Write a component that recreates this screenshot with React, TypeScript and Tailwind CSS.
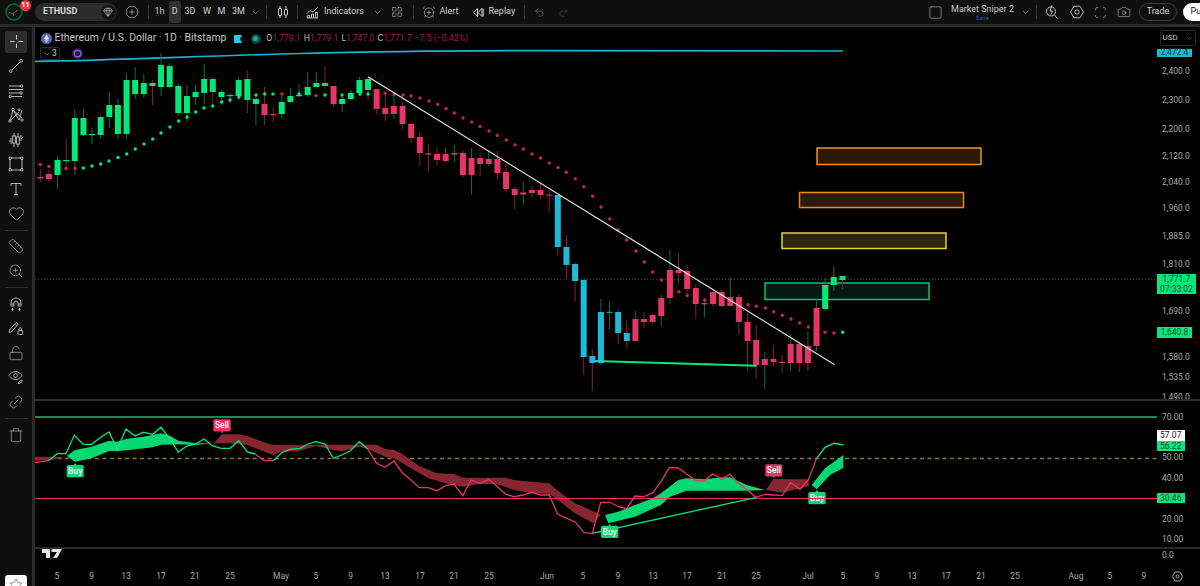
import React from "react";
import {
  AlarmClockPlus,
  Camera,
  ChevronDown,
  CirclePlus,
  Gem,
  Heart,
  LayoutGrid,
  Link2,
  LockOpen,
  Redo2,
  Ruler,
  Scan,
  Square,
  Star,
  Trash,
  Undo2,
  ZoomIn,
} from "lucide-react";

const GREEN = "#04e87a";
const RED = "#e53665";
const BLUE = "#1fb8d6";
const WICK_G = "#0b6e52";
const WICK_R = "#8a1c42";

// high, body top, body bottom, low, body colour, wick colour (page pixels)
type Candle = [number, number, number, number, string, string];
const g = (a: number, b: number, c: number, d: number, w = WICK_G): Candle => [a, b, c, d, GREEN, w];
const r = (a: number, b: number, c: number, d: number, w = WICK_R): Candle => [a, b, c, d, RED, w];
const b = (a: number, b2: number, c: number, d: number, w = WICK_R): Candle => [a, b2, c, d, BLUE, w];

const CANDLES: Candle[] = [
  r(169, 177, 178.4, 182), r(170, 174, 179, 181), g(156, 160, 175, 189), g(139, 160, 161.2, 169, WICK_R),
  g(109, 118, 161, 175), g(109, 118, 135, 136), g(128, 134, 135.2, 144), g(115, 117, 135, 138),
  g(92, 105, 117, 128), g(99, 105, 134, 139), g(73, 80, 134, 138), g(67, 80, 94, 99),
  g(74, 83, 94, 98), g(80, 83, 86, 105, WICK_R), g(53, 65, 87, 96), g(63, 66, 87, 88),
  g(84, 86, 113, 116), g(85, 96, 113, 122), g(85, 92, 97, 105), g(64, 79, 93, 105),
  g(77, 79, 92, 105, WICK_R), g(90, 92, 97, 105), g(93, 95, 96.2, 103), g(77, 80, 96, 100),
  g(70, 79, 100, 113, WICK_R), g(97, 99, 104, 125), r(87, 104, 115, 125), r(107, 114, 115.2, 122),
  g(93, 102, 114, 118), g(88, 96, 102, 103), g(84, 95, 96.2, 97), g(72, 87, 95, 97),
  g(72, 83, 87, 87), g(66, 83, 86, 89, WICK_R), r(86, 86, 104, 107), g(94, 99, 104, 112),
  g(90, 93, 99, 100), g(77, 80, 93, 96), g(77, 79, 90, 100, WICK_R), r(89, 89, 109, 114),
  r(93, 108, 114, 121), r(93, 106, 114, 119, WICK_G), r(102, 106, 124, 129), r(124, 124, 138, 143),
  r(132, 137, 153, 166), r(144, 153.4, 154.6, 171), r(148, 154, 160, 165), r(148, 154, 161, 162, WICK_G),
  r(145, 153, 154.6, 162, WICK_G), r(150, 153, 175, 177), r(148, 158, 175, 194, WICK_G), r(153, 158, 164, 176),
  r(150, 159, 164, 166, WICK_G), r(151, 159, 173, 179), r(165, 172, 189, 192), r(187, 189, 195, 209),
  r(182, 192.4, 194.6, 205, WICK_G), r(186, 190, 193, 197, WICK_G), r(183, 190, 195, 199), r(190, 194.6, 195.6, 212),
  b(195, 195, 247, 255), b(235, 247, 265, 280), b(262, 264, 281, 301), b(280, 280, 357, 375),
  b(349, 356, 363, 391), b(299, 312, 363, 365, WICK_G), b(302, 311.8, 312.8, 330, WICK_G), b(309, 312, 333, 344),
  b(321, 333, 341, 348), r(311, 319, 341, 341, WICK_G), r(312, 319, 322, 328), r(314, 315, 322, 323),
  r(295, 298, 316, 326, WICK_G), r(250, 270, 298, 304, WICK_G), r(254, 270, 273, 283), r(265, 271, 289, 297),
  r(284, 288, 304, 319), r(298, 303, 304.4, 317, WICK_G), r(290, 292, 304, 307), r(290, 292, 306, 307),
  r(277, 297, 306, 306, WICK_G), r(294, 297, 322, 335), r(313, 322, 341, 370), r(325, 340, 365, 379),
  r(352, 359, 365, 389, WICK_G), r(345, 359, 362, 366), r(355, 361.8, 363, 373), r(334, 344, 363, 371, WICK_G),
  r(343, 344, 363, 372), r(331, 346, 363, 371, WICK_G), r(299, 308, 346, 351, WICK_G), g(278, 285, 309, 311),
  g(266, 277, 285, 291), g(276, 276, 280, 289, WICK_R),
];

// parabolic SAR dots: x, y
const SAR_GREEN = [
  [83.3, 168], [92, 166], [100.7, 164], [109, 161], [118, 157.5], [126.7, 154], [135.3, 149], [144, 144],
  [152.7, 139], [161, 133], [170, 127], [178.7, 121], [187, 117], [195.7, 112], [204, 108], [212.7, 106],
  [221.7, 102], [230, 100], [239, 97], [256, 95], [264.7, 94], [273, 94], [299, 94], [325, 95], [342, 95],
  [360, 94], [368, 94], [842.7, 332.3],
];
const SAR_RED = [
  [40.3, 164.5], [49, 166.5], [66, 168.5], [75, 168.5], [282, 94], [316, 95.6], [385, 93.5], [394, 94.5],
  [403, 95], [411, 96], [420, 98], [429, 101], [437.7, 104.5], [446, 108.5], [454.3, 113], [463, 118],
  [471.7, 122], [480, 126.5], [489, 131], [497.3, 135.5], [506.3, 140], [515, 145], [523.3, 149], [532, 154],
  [540.7, 158], [549.3, 163], [558, 167.5], [566.3, 172.3], [575.3, 178.7], [583.7, 186.7], [592.7, 196.3],
  [601, 207], [609.7, 219], [618, 230], [626.7, 240], [636, 251], [644.3, 262], [652.7, 272], [661.7, 280],
  [679, 291.7], [687.3, 295.5], [704.7, 300.3], [748, 304.7], [756.3, 306.3], [765.3, 308], [773.7, 311.7],
  [782.3, 315.3], [791, 319], [799.7, 323], [808.3, 327], [825, 332.3], [834, 333],
];

const ZONES = [
  { x: 817, y: 148, w: 164, h: 16.5, border: "#f0921e", fill: "#2b1a07" },
  { x: 799.5, y: 192.5, w: 164, h: 15, border: "#ea8a1c", fill: "#2c1b07" },
  { x: 782, y: 233, w: 164, h: 15.5, border: "#ead43a", fill: "#2b2709" },
  { x: 765, y: 283, w: 164, h: 16.5, border: "#0ec46f", fill: "#021a11" },
];

const RSI_A = "35,462.7 48.3,460.7";
const RSI_B =
  "48.3,460.7 57.3,453.7 66,453.7 74.3,435.3 83.3,444.3 91.7,444.3 100.7,437.3 109,432 117.3,449.3 126,429 135,436 143.3,432.3 152.7,434.3 161,427.3 170,439 178.3,452 186.7,446 195.7,444 204,439 212.7,446 221.3,448.3 230,448.3 238.7,440.7 247.3,452 255,454";
const RSI_C = "255,454 264.3,460.7 273.3,460.7";
const RSI_D =
  "273.3,460.7 281.7,452.7 290,449.3 300,448.3 308,444 316,441.7 325,444 333.3,458.3 341.7,455 350,451 359.3,441.7 367.7,449";
const RSI_E =
  "367.7,449 376.7,463.3 385,467.3 394,461 402.3,472.7 411,480 419.3,487.7 428.3,487.7 436.7,490.7 445.7,485.7 454,484 462.7,495.7 471,480 480,483.3 489,479.3 496.7,486 505.7,494.3 514,496.7 523.3,495 531.7,492.3 540.7,495 549.3,495 557.7,514.3 566.7,518.3 575,521.7 584,532.7 592.3,533.3 600.7,502.3 610,502.3 618.3,506.7 626.7,508.7 635,496 644,496.7 652.7,492.7 661,481.7 669.3,467.7 678.3,468 686.7,474 695,480.3 704.3,481 712.7,473.7 721.7,479.3 730,474 738.3,483.3 747.3,490 755.7,497.3 765,494.3 773.3,495 782.3,495.3 790.7,482.7 800,489.3 808.3,480 816.7,458.3";
const RSI_F = "816.7,458.3 825,447.3 834,443.3 843.3,445";

// cloud outlines measured on a 3x grid from the page's left edge, y from 400
const crop = (pts: number[][]) => pts.map(([x, y]) => `${x / 3},${400 + y / 3}`).join(" ");

const CLOUD_GREEN = [
  crop([[200, 168], [225, 150], [275, 140], [327, 122], [352, 125], [378, 117], [430, 110], [483, 100], [510, 107], [535, 122], [587, 130], [638, 130], [587, 135], [535, 133], [483, 134], [458, 142], [405, 148], [352, 154], [327, 153], [275, 175], [225, 185]]),
  crop([[1802, 342], [1815, 345], [1855, 335], [1905, 315], [1958, 295], [1983, 280], [2035, 240], [2060, 235], [2113, 238], [2165, 232], [2190, 232], [2240, 255], [2295, 270], [2240, 272], [2165, 272], [2060, 272], [2010, 290], [1983, 315], [1905, 350], [1855, 362], [1825, 370], [1815, 345]]),
  crop([[2435, 255], [2475, 205], [2530, 165], [2530, 203], [2490, 225], [2450, 268]]),
];
const CLOUD_RED = [
  crop([[105, 170], [150, 170], [200, 170], [150, 180], [105, 182]]),
  crop([
    [642, 130], [665, 103], [716, 103], [742, 108], [793, 127], [820, 135], [900, 136], [948, 134], [1000, 134], [1050, 134], [1130, 134], [1155, 147], [1182, 150], [1207, 162], [1258, 198], [1310, 220], [1362, 222], [1388, 233], [1517, 233], [1542, 240], [1595, 245], [1648, 250], [1673, 272], [1725, 310], [1790, 338], [1802, 345],
    [1780, 370], [1725, 340], [1673, 300], [1648, 282], [1595, 280], [1542, 270], [1490, 252], [1440, 252], [1388, 260], [1337, 250], [1285, 235], [1233, 205], [1182, 175], [1155, 170], [1105, 148], [1078, 140], [1025, 154], [1000, 150], [948, 138], [900, 152], [845, 155], [820, 165], [793, 155], [742, 135], [690, 130],
  ]),
  crop([[2298, 270], [2320, 237], [2425, 238], [2427, 258], [2347, 278]]),
];

const TAGS = [
  { x: 66.7, y: 465, w: 17, text: "Buy", fill: "#08d975", up: true },
  { x: 213.3, y: 419.3, w: 17.4, text: "Sell", fill: "#e53665", up: false },
  { x: 601, y: 525.7, w: 17.3, text: "Buy", fill: "#08d975", up: true },
  { x: 765.3, y: 464.3, w: 17, text: "Sell", fill: "#e53665", up: false },
  { x: 808.3, y: 492, w: 17.4, text: "Buy", fill: "#08d975", up: true },
];

const PRICE_TICKS = [
  ["2,400.0", 70.5], ["2,300.0", 99.5], ["2,200.0", 129], ["2,120.0", 155.5], ["2,040.0", 181.5], ["1,960.0", 208],
  ["1,885.0", 236], ["1,810.0", 264], ["1,690.0", 311], ["1,580.0", 356.7], ["1,535.0", 376.7], ["1,490.0", 397],
] as const;

const RSI_TICKS = [
  ["70.00", 416.7], ["50.00", 457.3], ["40.00", 478], ["20.00", 518.7], ["10.00", 538.7],
] as const;

const TIME_TICKS = [
  ["5", 57], ["9", 91.7], ["13", 126], ["17", 161], ["21", 195], ["25", 230], ["May", 281], ["5", 316], ["9", 350.7],
  ["13", 385], ["17", 420], ["21", 454], ["25", 489], ["Jun", 547], ["5", 583], ["9", 618], ["13", 653], ["17", 687],
  ["21", 722], ["25", 756], ["Jul", 808], ["5", 843], ["9", 877], ["13", 912], ["17", 946], ["21", 981], ["25", 1015],
  ["Aug", 1076], ["5", 1110], ["9", 1144],
] as const;

const ICON = "#b4b4b4";

function ToolIcon({ children }: { children: React.ReactNode }) {
  return (
    <svg width="16" height="16" viewBox="0 0 16 16" fill="none" stroke={ICON} strokeWidth="1">
      {children}
    </svg>
  );
}

const TOOLS: React.ReactNode[][] = [
  [
    <ToolIcon key="line">
      <path d="M3.5 12.5 12.5 3.5" />
      <circle cx="2.8" cy="13.2" r="1.3" />
      <circle cx="13.2" cy="2.8" r="1.3" />
    </ToolIcon>,
    <ToolIcon key="fib">
      <path d="M1 3h11M1 6.5h14M1 10h11M4 13.5h10" />
      <circle cx="13.6" cy="3" r="1.2" />
      <circle cx="13" cy="10" r="1.2" />
      <circle cx="2.4" cy="13.5" r="1.2" />
    </ToolIcon>,
    <ToolIcon key="xabcd">
      <path d="M2 14 5 3l6 10 3-10M5 3l9 8M2 14 11 5" />
      <circle cx="5" cy="2.5" r="1.2" />
      <circle cx="11" cy="2.8" r="1" />
      <circle cx="2" cy="14" r="1.2" />
      <circle cx="14" cy="13" r="1.2" />
    </ToolIcon>,
    <ToolIcon key="forecast">
      <path d="M6 1v14M10 1v14M3 6v6M13 3v6" />
      <rect x="4.6" y="4" width="2.8" height="7" fill="#0f0f0f" />
      <rect x="8.6" y="5" width="2.8" height="7" fill="#0f0f0f" />
      <path d="M1 9h2M13 7l2-2" />
    </ToolIcon>,
    <ToolIcon key="rect">
      <path d="M3 2h10M3 14h10M2 3v10M14 3v10" />
      <circle cx="2.2" cy="2.2" r="1.3" />
      <circle cx="13.8" cy="2.2" r="1.3" />
      <circle cx="2.2" cy="13.8" r="1.3" />
      <circle cx="13.8" cy="13.8" r="1.3" />
    </ToolIcon>,
    <ToolIcon key="text">
      <path d="M3 5V2.5h10V5M8 2.5v11M6 13.5h4" />
    </ToolIcon>,
    <Heart key="heart" size={17} strokeWidth={1} color={ICON} />,
  ],
  [
    <Ruler key="ruler" size={16} strokeWidth={1} color={ICON} />,
    <ZoomIn key="zoom" size={16} strokeWidth={1} color={ICON} />,
  ],
  [
    <ToolIcon key="magnet">
      <path d="M3 10V7a5 5 0 0 1 10 0v3h-3V7a2 2 0 0 0-4 0v3zM3 8h3M10 8h3" />
      <path d="M4.5 12v2.5M11.5 12v2.5M3.5 13.5l1 1 1-1M10.5 13.5l1 1 1-1" />
    </ToolIcon>,
    <ToolIcon key="pencil-lock">
      <path d="M1.5 10 8 2.5l2 1.8L3.5 12l-2.2.5zM7 3.7l2 1.8" />
      <rect x="10" y="10.5" width="4.6" height="4" rx=".6" />
      <path d="M11 10.5V9a1.3 1.3 0 0 1 2.6 0v1.5" />
    </ToolIcon>,
    <LockOpen key="lock" size={16} strokeWidth={1} color={ICON} />,
    <ToolIcon key="eye">
      <path d="M1 6.5S3.5 2.5 7.5 2.5 14 6.5 14 6.5s-2.5 4-6.5 4-6.5-4-6.5-4z" />
      <circle cx="7.5" cy="6.5" r="1.8" />
      <path d="m10 14 3.5-3 1 1-3.5 3z" />
    </ToolIcon>,
    <Link2 key="link" size={16} strokeWidth={1} color={ICON} className="-rotate-45" />,
  ],
  [<Trash key="trash" size={16} strokeWidth={1} color={ICON} />],
];

function Sep() {
  return <div className="h-[14px] w-px bg-[#333333]" />;
}

function ChartPane() {
  return (
    <svg className="absolute inset-0 h-full w-full" aria-hidden="true">
      <g transform="translate(-35 -27)">
        <line x1="35" y1="279.5" x2="1157" y2="279.5" stroke="#1c6b4f" strokeWidth="0.8" strokeDasharray="1 2" />
        <path d="M35 61.4C120 60 200 56 300 53.5S420 51 520 50.6 720 50.8 843 51" fill="none" stroke="#1ab3cf" strokeWidth="1.7" />
        {ZONES.map((z) => (
          <rect key={z.y} x={z.x} y={z.y} width={z.w} height={z.h} fill={z.fill} stroke={z.border} strokeWidth="1.5" />
        ))}
        {CANDLES.map((c, i) => {
          const x = 40.3 + 8.625 * i;
          return (
            <g key={i}>
              <line x1={x} y1={c[0]} x2={x} y2={c[3]} stroke={c[5]} strokeWidth="1" />
              <rect x={x - 3} y={c[1]} width="6" height={c[2] - c[1]} fill={c[4]} />
            </g>
          );
        })}
        {SAR_RED.map(([x, y]) => (
          <circle key={x} cx={x} cy={y} r="1.7" fill="#c4245a" />
        ))}
        {SAR_GREEN.map(([x, y]) => (
          <circle key={x} cx={x} cy={y} r="1.7" fill={GREEN} />
        ))}
        <line x1="368" y1="76.7" x2="834.3" y2="364.5" stroke="#e8e8e8" strokeWidth="1.2" />
        <line x1="595" y1="361" x2="756.7" y2="365.7" stroke={GREEN} strokeWidth="2" />
      </g>
    </svg>
  );
}

function RsiPane() {
  return (
    <svg className="absolute inset-0 h-full w-full" aria-hidden="true">
      <g transform="translate(-35 -401)">
        <line x1="35" y1="417" x2="1157" y2="417" stroke="#0fbf75" strokeWidth="1.4" />
        <line x1="35" y1="458.5" x2="1157" y2="458.5" stroke="#8a7a20" strokeWidth="1.3" strokeDasharray="4 3.5" />
        {CLOUD_GREEN.map((p) => (
          <polygon key={p} points={p} fill="#04d873" />
        ))}
        {CLOUD_RED.map((p) => (
          <polygon key={p} points={p} fill="#86262f" />
        ))}
        <line x1="35" y1="498.5" x2="1157" y2="498.5" stroke="#ee2f5f" strokeWidth="1.2" />
        <line x1="592.3" y1="533.3" x2="756.7" y2="497.3" stroke={GREEN} strokeWidth="1.3" />
        {[RSI_A, RSI_C, RSI_E].map((p) => (
          <polyline key={p} points={p} fill="none" stroke="#e53665" strokeWidth="1.3" />
        ))}
        {[RSI_B, RSI_D, RSI_F].map((p) => (
          <polyline key={p} points={p} fill="none" stroke={GREEN} strokeWidth="1.3" />
        ))}
        {TAGS.map((t) => {
          const mid = t.x + t.w / 2;
          const arrow = t.up
            ? `${mid - 1.5},${t.y} ${mid},${t.y - 2} ${mid + 1.5},${t.y}`
            : `${mid - 1.5},${t.y + 12} ${mid},${t.y + 14} ${mid + 1.5},${t.y + 12}`;
          return (
            <g key={t.x}>
              <rect x={t.x} y={t.y} width={t.w} height="12.3" rx="1.5" fill={t.fill} />
              <polygon points={arrow} fill={t.fill} />
              <text x={mid} y={t.y + 9} textAnchor="middle" fontSize="8.5" fontWeight="500" fill="#ffffff" fontFamily="Roboto, sans-serif">
                {t.text}
              </text>
            </g>
          );
        })}
        <line x1="808.3" y1="498.5" x2="825.7" y2="498.5" stroke="#ee2f5f" strokeWidth="1.2" />
      </g>
    </svg>
  );
}

export default function App() {
  return (
    <div className="flex h-[586px] w-[1200px] flex-col overflow-hidden bg-[#2b2b2b] font-['Roboto',sans-serif] text-[#c6c8cc]">
      {/* top bar */}
      <header className="flex h-[24px] shrink-0 items-center bg-[#0f0f0f] text-[9px] text-[#d0d2d6]">
        <div className="relative ml-[5px] h-[18px] w-[18px] rounded-full border-2 border-[#0d5a2c] bg-[#06170d]">
          <svg viewBox="0 0 14 14" className="h-full w-full" fill="none">
            <path d="M2 7.5 6 8.5 11 5" stroke="#b04a2a" strokeWidth="1" />
            <path d="M6 8.5 7 11" stroke="#1f9d55" strokeWidth="1" />
          </svg>
          <span className="absolute left-[13px] top-[-5px] flex h-[11px] w-[11px] items-center justify-center rounded-full bg-[#ef3347] text-[7px] font-bold text-white">
            11
          </span>
        </div>
        <div className="ml-[12px] flex h-[18px] w-[82px] items-center justify-between rounded-full bg-[#2b2b2b] pl-[8px] pr-[1.5px]">
          <span className="text-[9px] font-bold text-[#d6d6d6]">ETHUSD</span>
          <span className="flex h-[15px] w-[15px] items-center justify-center rounded-full bg-[#141414]">
            <Gem size={10} strokeWidth={1.5} color="#d0d0d0" />
          </span>
        </div>
        <CirclePlus size={14} strokeWidth={1} color="#cfcfcf" className="ml-[8px]" />
        <div className="ml-[8.5px]">
          <Sep />
        </div>
        <span className="ml-[5px] w-[12px] text-center">1h</span>
        <span className="ml-[3.5px] flex h-[22px] w-[11.5px] items-center justify-center rounded-[2px] bg-[#303030]">D</span>
        <span className="ml-[2.5px] w-[14px] text-center">3D</span>
        <span className="ml-[3.5px] w-[13px] text-center">W</span>
        <span className="ml-[1.5px] w-[13px] text-center">M</span>
        <span className="ml-[3.5px] w-[14px] text-center">3M</span>
        <ChevronDown size={9} strokeWidth={1.5} color="#b0b0b0" className="ml-[5.5px]" />
        <div className="ml-[6px]">
          <Sep />
        </div>
        <svg width="14" height="14" viewBox="0 0 14 14" fill="none" stroke="#cfcfcf" className="ml-[8.5px]">
          <path d="M4 1v2.5M4 10.5V13M10 1v3M10 10v3" />
          <rect x="2.5" y="3.5" width="3" height="7" rx=".5" />
          <rect x="8.5" y="4.5" width="3" height="5.5" rx=".5" />
        </svg>
        <div className="ml-[7px]">
          <Sep />
        </div>
        <svg width="13" height="13" viewBox="0 0 13 13" fill="none" stroke="#cfcfcf" strokeWidth=".9" className="ml-[8.5px]">
          <path d="M1 7.5 4 4.5l3 1.5L11.5 1.5" />
          <path d="M1 12h11M1.5 12V9.5h2V12M5.5 12V8h2v4M9.5 12V6.5h2V12" />
        </svg>
        <span className="ml-[5px] w-[40px]">Indicators</span>
        <ChevronDown size={9} strokeWidth={1.5} color="#b0b0b0" className="ml-[9px]" />
        <LayoutGrid size={12} strokeWidth={1} color="#cfcfcf" className="ml-[9px]" />
        <div className="ml-[9.5px]">
          <Sep />
        </div>
        <AlarmClockPlus size={14} strokeWidth={1} color="#cfcfcf" className="ml-[8px]" />
        <span className="ml-[4px]">Alert</span>
        <svg width="12" height="11" viewBox="0 0 12 11" fill="none" stroke="#cfcfcf" className="ml-[13px]">
          <path d="M5.5 1.5 1.5 5.5l4 4zM10 1.5l-4 4 4 4z" />
          <path d="M11.2 1.5v8" />
        </svg>
        <span className="ml-[5px]">Replay</span>
        <div className="ml-[9px]">
          <Sep />
        </div>
        <Undo2 size={11} strokeWidth={1} color="#a0a0a0" className="ml-[9px]" />
        <Redo2 size={11} strokeWidth={1} color="#5a5a5a" className="ml-[13px]" />

        <div className="ml-auto flex items-center">
          <Square size={15} strokeWidth={1} color="#b8b8b8" />
          <div className="ml-[7.5px] flex w-[64px] flex-col items-center gap-[1px] whitespace-nowrap pt-[2px] leading-none">
            <span className="text-[9px] text-[#c8c8c8]">Market Sniper 2</span>
            <span className="text-[6px] text-[#2f4ae6]">Save</span>
          </div>
          <ChevronDown size={9} strokeWidth={1.5} color="#b0b0b0" className="ml-[6px]" />
          <div className="ml-[6px]">
            <Sep />
          </div>
          <svg width="14" height="14" viewBox="0 0 14 14" fill="none" stroke="#cfcfcf" strokeWidth=".9" className="ml-[8px]">
            <circle cx="6" cy="6.5" r="4.5" />
            <path d="m9.5 10 3 3.5M7 .5 5 6h2.5L6 9.5" />
          </svg>
          <svg width="14" height="14" viewBox="0 0 14 14" fill="none" stroke="#cfcfcf" strokeWidth=".9" className="ml-[11px]">
            <path d="M4 1.2h6L13.5 7 10 12.8H4L.5 7z" />
            <circle cx="7" cy="7" r="2.2" />
          </svg>
          <Scan size={13} strokeWidth={1} color="#cfcfcf" className="ml-[10.5px]" />
          <Camera size={14} strokeWidth={1} color="#cfcfcf" className="ml-[10px]" />
          <span className="ml-[8px] flex h-[18px] w-[38px] items-center justify-center rounded-full border border-[#3c3c3c]">Trade</span>
          <span className="ml-[5.5px] flex h-[18px] w-[17.5px] items-center overflow-hidden whitespace-nowrap rounded-l-full bg-white pl-[8px] text-[#111111]">
            Publish
          </span>
        </div>
      </header>

      <div className="mt-[3px] flex min-h-0 flex-1">
        {/* drawing tools */}
        <aside className="relative mr-[3px] flex w-[32px] shrink-0 flex-col items-center bg-[#0f0f0f] pt-[4px]">
          <div className="flex h-[21.5px] w-[21.5px] items-center justify-center rounded-[3px] bg-[#2e2e2e]">
            <svg width="15" height="15" viewBox="0 0 15 15" stroke="#d0d0d0" strokeWidth="1">
              <path d="M7.5 1v4.5M7.5 9.5V14M1 7.5h4.5M9.5 7.5H14" />
            </svg>
          </div>
          <div className="mt-[1.5px] flex w-full flex-col items-center">
            {TOOLS.map((group, i) => (
              <React.Fragment key={i}>
                {i > 0 && (
                  <div className="flex h-[8.5px] w-full items-center justify-center pt-[1px]">
                    <div className="h-px w-[23px] bg-[#2e2e2e]" />
                  </div>
                )}
                {group.map((icon, j) => (
                  <div key={j} className="flex h-[24.5px] w-full items-center justify-center">
                    {icon}
                  </div>
                ))}
              </React.Fragment>
            ))}
          </div>
          <div className="absolute left-[4.5px] top-[548px] flex h-[30px] w-[22px] justify-center rounded-[3px] bg-white pt-[3px]">
            <Star size={14} strokeWidth={1} color="#333333" />
          </div>
        </aside>

        <main className="flex min-w-0 flex-1 flex-col bg-black">
          {/* price pane */}
          <section className="flex h-[372px] shrink-0">
            <div className="relative min-w-0 flex-1 overflow-hidden">
              <ChartPane />
              <div className="absolute left-[5.5px] top-[4px] flex h-[15px] items-center text-[10.4px] leading-none">
                <svg width="11" height="11" viewBox="0 0 11 11" className="mr-[3px]">
                  <circle cx="5.5" cy="5.5" r="5.5" fill="#5a64b8" />
                  <path d="M5.5 1.5 3 5.7l2.5 1.4L8 5.7zM3 6.4l2.5 3 2.5-3-2.5 1.4z" fill="#e6e8f5" />
                </svg>
                <span className="whitespace-nowrap text-[#c4c6cc]">Ethereum / U.S. Dollar · 1D · Bitstamp</span>
                <svg width="8" height="8" viewBox="0 0 8 8" className="ml-[7.5px]">
                  <path d="M0 0h8L6 4l2 4H0z" fill="#1fd0ec" />
                </svg>
                <span className="ml-[9px] flex h-[10px] w-[10px] items-center justify-center rounded-full bg-[#0d4a44]">
                  <span className="h-[5px] w-[5px] rounded-full bg-[#26a69a]" />
                </span>
                <span className="ml-[5.5px] flex gap-[3px] whitespace-nowrap text-[8.7px] text-[#a81a4c]">
                  <span>
                    <span className="text-[#b4b6bc]">O</span>1,779.1
                  </span>
                  <span>
                    <span className="text-[#b4b6bc]">H</span>1,779.1
                  </span>
                  <span>
                    <span className="text-[#b4b6bc]">L</span>1,747.0
                  </span>
                  <span>
                    <span className="text-[#b4b6bc]">C</span>1,771.7
                  </span>
                  <span>−7.5 (−0.42%)</span>
                </span>
              </div>
              <div className="absolute left-[5px] top-[20px] flex items-center">
                <span className="flex h-[13px] w-[20px] items-center justify-center gap-[1px] rounded-[2px] border border-[#2a2a2a] text-[8.5px] leading-none">
                  <ChevronDown size={8} strokeWidth={1.5} />3
                </span>
                <svg width="11" height="11" viewBox="0 0 11 11" fill="none" className="ml-[12px]">
                  <circle cx="5.5" cy="5.5" r="5.5" fill="#2a1a4c" />
                  <circle cx="5.5" cy="5.5" r="3.3" stroke="#8a5fd4" strokeWidth="1.4" />
                </svg>
              </div>
            </div>
            <div className="relative w-[43px] shrink-0 overflow-hidden text-[8.5px] leading-none">
              <div className="absolute left-[2.5px] top-[3px] z-10 flex h-[16px] w-[36.5px] items-center justify-between rounded-[2px] border border-[#2a2a2a] bg-black px-[2px] text-[8px]">
                USD
                <ChevronDown size={7} strokeWidth={1.5} />
              </div>
              <span className="absolute left-0 top-[21.7px] flex h-[8px] w-[35px] items-center justify-center bg-[#1fb8d6] text-[#0b3a44]">2,472.4</span>
              {PRICE_TICKS.map(([t, y]) => (
                <span key={t} className="absolute left-[5px] -translate-y-1/2 text-[#a8a8a8]" style={{ top: y - 27 }}>
                  {t}
                </span>
              ))}
              <span className="absolute left-0 top-[247.3px] flex h-[19.5px] w-[39px] flex-col items-center justify-center gap-[1px] bg-[#04e87a] text-[#0b4a30]">
                <span>1,771.7</span>
                <span>07:33:02</span>
              </span>
              <span className="absolute left-0 top-[300px] flex h-[10.7px] w-[35px] items-center justify-center bg-[#04e87a] text-[#0b4a30]">1,640.8</span>
            </div>
          </section>
          <div className="h-[2px] shrink-0 bg-[#2b2b2b]" />

          {/* indicator pane */}
          <section className="flex h-[146px] shrink-0">
            <div className="relative min-w-0 flex-1 overflow-hidden">
              <RsiPane />
            </div>
            <div className="relative w-[43px] shrink-0 overflow-hidden text-[8.5px] leading-none">
              {RSI_TICKS.map(([t, y]) => (
                <span key={t} className="absolute left-[5px] -translate-y-1/2 text-[#a8a8a8]" style={{ top: y - 401 }}>
                  {t}
                </span>
              ))}
              <span className="absolute left-0 top-[29px] flex h-[10.7px] w-[27.5px] items-center justify-center bg-white text-[#222222]">57.07</span>
              <span className="absolute left-0 top-[39.7px] flex h-[10.3px] w-[27.5px] items-center justify-center bg-[#04e87a] text-[#0b4a30]">56.22</span>
              <span className="absolute left-0 top-[91.7px] flex h-[10.7px] w-[27.5px] items-center justify-center bg-[#04e87a] text-[#0b4a30]">30.46</span>
            </div>
          </section>
          <div className="h-[1.5px] shrink-0 bg-[#2b2b2b]" />

          {/* time axis */}
          <section className="relative min-h-0 flex-1 overflow-hidden text-[8.5px] leading-none text-[#a8a8a8]">
            <svg width="20" height="10" viewBox="0 0 20 10" className="absolute left-[7px] top-[0.5px]" fill="#e4e4e4" aria-hidden="true">
              <path d="M0 0h8v9H4V4H0zM9.5 0H20l-5 9h-4l4-6H9.5z" />
            </svg>
            {TIME_TICKS.map(([t, x], i) => (
              <span key={i} className="absolute top-[27px] -translate-x-1/2 -translate-y-1/2" style={{ left: x - 35 }}>
                {t}
              </span>
            ))}
            <span className="absolute left-[1127px] top-[6px] -translate-y-1/2">0.0</span>
            <svg width="11" height="11" viewBox="0 0 11 11" fill="none" stroke="#bdbdbd" strokeWidth=".9" className="absolute left-[1137px] top-[22px]">
              <path d="M3 1h5l2.5 4.5L8 10H3L.5 5.5z" />
              <circle cx="5.5" cy="5.5" r="1.5" />
            </svg>
          </section>
        </main>
      </div>
    </div>
  );
}
